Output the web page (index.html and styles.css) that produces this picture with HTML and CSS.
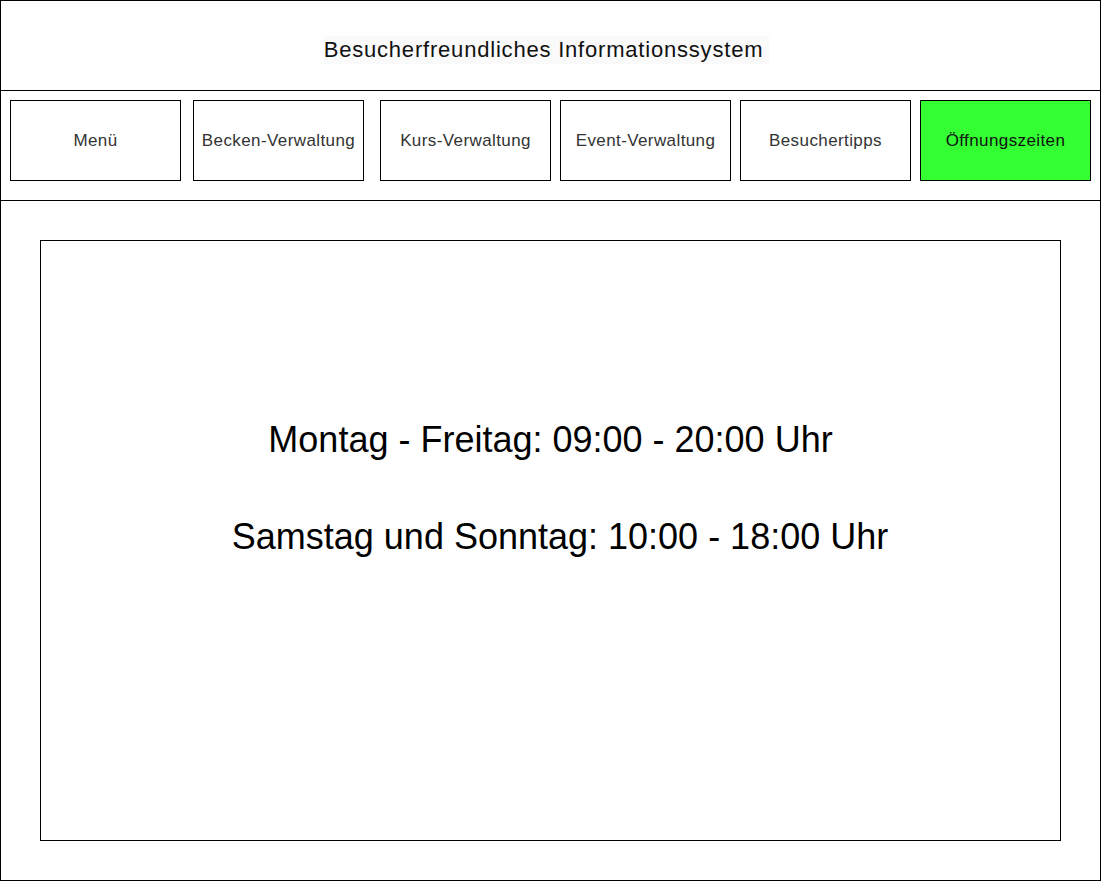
FILE: index.html
```html
<!DOCTYPE html>
<html lang="de">
<head>
<meta charset="utf-8">
<title>Besucherfreundliches Informationssystem</title>
<link rel="stylesheet" href="styles.css">
</head>
<body>
<div class="frame">
  <header class="header">
    <span class="title">Besucherfreundliches Informationssystem</span>
  </header>
  <nav class="nav">
    <div class="tab">Menü</div>
    <div class="tab tab-shift1">Becken-Verwaltung</div>
    <div class="tab tab-shift2">Kurs-Verwaltung</div>
    <div class="tab">Event-Verwaltung</div>
    <div class="tab">Besuchertipps</div>
    <div class="tab tab-active">Öffnungszeiten</div>
  </nav>
  <main class="main">
    <section class="panel">
      <p class="hours">Montag - Freitag: 09:00 - 20:00 Uhr</p>
      <p class="hours hours-second">Samstag und Sonntag: 10:00 - 18:00 Uhr</p>
    </section>
  </main>
</div>
</body>
</html>
```

FILE: styles.css
```css
* {
  box-sizing: border-box;
}

html, body {
  margin: 0;
  padding: 0;
  background: #ffffff;
}

body {
  font-family: "Liberation Sans", Arial, Helvetica, sans-serif;
  color: #000;
}

.frame {
  width: 1101px;
  height: 881px;
  border: 1px solid #000;
  display: flex;
  flex-direction: column;
}

.header {
  height: 90px;
  border-bottom: 1px solid #000;
  display: flex;
  justify-content: center;
  align-items: flex-start;
  padding-top: 35px;
  padding-right: 8px;
}

.title {
  display: inline-block;
  background: #fafafa;
  font-size: 22px;
  letter-spacing: 0.8px;
  line-height: 28px;
  padding-right: 6px;
  color: #111;
}

.nav {
  height: 110px;
  border-bottom: 1px solid #000;
  display: flex;
  align-items: flex-start;
  gap: 9px;
  padding: 9px 0 0 9px;
}

.tab {
  width: 171px;
  height: 81px;
  border: 1px solid #000;
  display: flex;
  align-items: center;
  justify-content: center;
  font-size: 17px;
  letter-spacing: 0.4px;
  color: #333;
  background: #fff;
}

.tab-shift1 {
  margin-left: 3px;
}

.tab-shift2 {
  margin-left: 7px;
}

.tab-active {
  background: #33ff33;
  color: #111;
}

.main {
  flex: 1;
  padding: 39px 0 0 39px;
}

.panel {
  width: 1021px;
  height: 601px;
  border: 1px solid #000;
  display: flex;
  flex-direction: column;
  align-items: center;
  padding-top: 178px;
}

.hours {
  margin: 0;
  font-size: 36px;
  line-height: 42px;
  color: #000;
  white-space: nowrap;
}

.hours-second {
  margin-top: 55px;
  padding-left: 19px;
}
```
